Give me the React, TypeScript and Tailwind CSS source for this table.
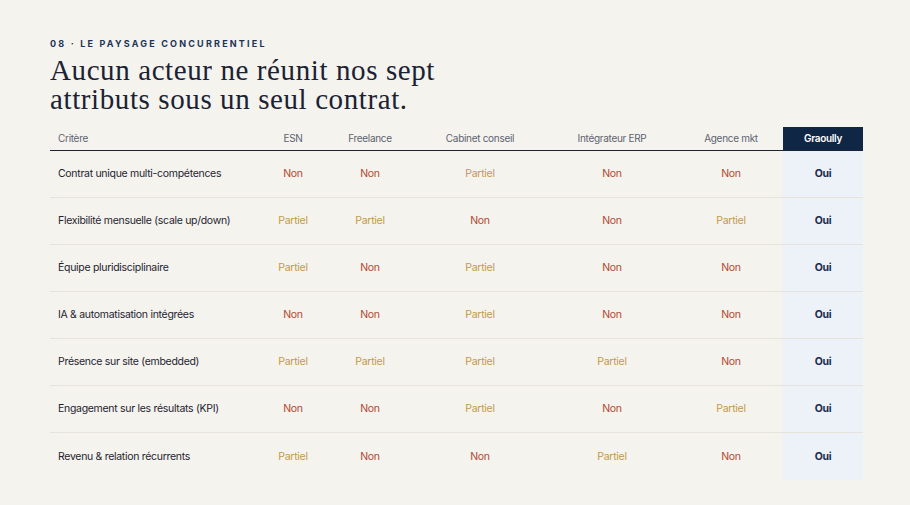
const columns = [
  "ESN",
  "Freelance",
  "Cabinet conseil",
  "Intégrateur ERP",
  "Agence mkt",
] as const;

type Verdict = "Non" | "Partiel";

const rows: { label: string; values: Verdict[] }[] = [
  { label: "Contrat unique multi-compétences", values: ["Non", "Non", "Partiel", "Non", "Non"] },
  { label: "Flexibilité mensuelle (scale up/down)", values: ["Partiel", "Partiel", "Non", "Non", "Partiel"] },
  { label: "Équipe pluridisciplinaire", values: ["Partiel", "Non", "Partiel", "Non", "Non"] },
  { label: "IA & automatisation intégrées", values: ["Non", "Non", "Partiel", "Non", "Non"] },
  { label: "Présence sur site (embedded)", values: ["Partiel", "Partiel", "Partiel", "Partiel", "Non"] },
  { label: "Engagement sur les résultats (KPI)", values: ["Non", "Non", "Partiel", "Non", "Partiel"] },
  { label: "Revenu & relation récurrents", values: ["Partiel", "Non", "Non", "Partiel", "Non"] },
];

const grid = "grid grid-cols-[211px_64px_90px_130px_134px_104px_80px]";
const sans = "font-['Inter','Liberation_Sans',sans-serif]";

function Cell({ value }: { value: Verdict }) {
  return (
    <div
      className={`flex items-center justify-center ${
        value === "Non" ? "text-[#b3482f]" : "text-[#c39a4a]"
      }`}
    >
      {value}
    </div>
  );
}

export default function App() {
  return (
    <div className={`h-[505px] w-[910px] bg-[#f5f3ee] px-[50px] pt-[38px] ${sans}`}>
      <p className="text-[9px] leading-[12px] font-bold tracking-[2.2px] text-[#1c3357]">
        08 · LE PAYSAGE CONCURRENTIEL
      </p>
      <h1 className="mt-[6px] font-['Liberation_Serif',serif] text-[29px] leading-[29px] tracking-[0.6px] text-[#1b2233]">
        Aucun acteur ne réunit nos sept
        <br />
        attributs sous un seul contrat.
      </h1>

      <div className="mt-[13px] w-[813px] text-[10.5px] tracking-[-0.3px]">
        <div className={`${grid} h-[24px] border-b-[1.5px] border-[#1d2333] text-[10px] text-[#5d6371]`}>
          <div className="flex items-center pl-[8px]">Critère</div>
          {columns.map((c) => (
            <div key={c} className="flex items-center justify-center">
              {c}
            </div>
          ))}
          <div className="flex items-center justify-center bg-[#0f2645] font-semibold text-white">
            Graoully
          </div>
        </div>

        {rows.map((row, i) => (
          <div
            key={row.label}
            className={`${grid} h-[47px] ${i < rows.length - 1 ? "border-b border-[#e6e3dd]" : ""}`}
          >
            <div className="flex items-center pl-[8px] text-[#1e2330]">{row.label}</div>
            {row.values.map((v, j) => (
              <Cell key={j} value={v} />
            ))}
            <div className="flex items-center justify-center bg-[#edf1f8] font-bold text-[#1b2d50]">
              Oui
            </div>
          </div>
        ))}
      </div>
    </div>
  );
}
